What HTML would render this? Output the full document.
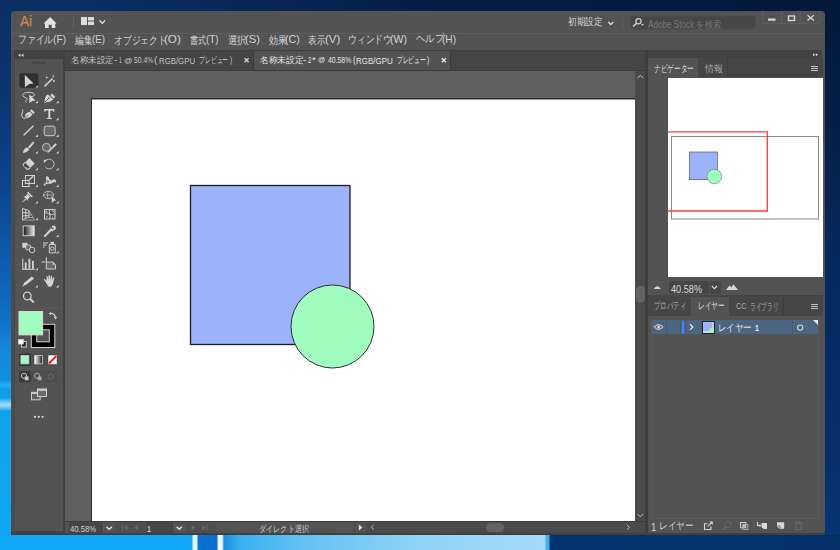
<!DOCTYPE html>
<html><head><meta charset="utf-8">
<style>
*{box-sizing:border-box;margin:0;padding:0}
html,body{width:840px;height:550px;overflow:hidden;background:#062552;font-family:'Liberation Sans',sans-serif;position:relative}
.a{position:absolute}
.t{position:absolute;white-space:nowrap;line-height:1;transform-origin:0 0}
svg{position:absolute;overflow:visible}

</style></head><body>
<!-- desktop -->
<div class="a" style="left:0;top:0;width:840px;height:12px;background:linear-gradient(90deg,#0b2f62 0,#0a2e62 100px,#082a5c 200px,#061f48 400px,#041b40 640px,#03183a 840px)"></div>
<div class="a" style="left:0;top:0;width:12px;height:550px;background:linear-gradient(180deg,#0b2f62 0,#0b3064 30px,#0b3674 100px,#0c4590 190px,#0d5cb0 260px,#1070c8 320px,#1888dc 350px,#1190e0 380px,#22b0f5 385px,#0d9eea 389px,#0f9eea 398px,#70c8f4 402px,#a8dcf6 405px,#60c0f2 408px,#12a2ec 411px,#10a7f3 550px)"></div>
<div class="a" style="left:825px;top:0;width:15px;height:550px;background:linear-gradient(180deg,#03183a 0,#042048 130px,#062a60 275px,#062f6c 450px,#083674 550px)"></div>
<div class="a" style="left:0;top:535px;width:840px;height:15px;background:linear-gradient(90deg,#10a8f5 0,#10a8f5 192px,#dff3ff 193px,#dff3ff 197px,#0a72d2 198px,#0a6fce 217px,#eef8ff 218px,#eef8ff 222px,#1a8ee0 224px,#3ab0f0 240px,#62c0f3 300px,#8fd2f6 420px,#a6dbf8 545px,#40b0f0 546px,#40b0f0 549px,#04336f 550px,#05346f 700px,#04306a 840px)"></div>
<!-- window -->
<div class="a" style="left:11px;top:11px;width:814px;height:524px;background:#535353;border-radius:4px 4px 0 0"></div>
<div class="a" style="left:11px;top:33px;width:814px;height:1px;background:#5d5d5d"></div>
<div class="a" style="left:11px;top:532px;width:814px;height:3px;background:#3f3f3f"></div>
<div class="a" style="left:11px;top:50px;width:3px;height:482px;background:#4e4c4b"></div>
<div class="a" style="left:822px;top:58px;width:1px;height:475px;background:#474747"></div>
<!-- title bar icons -->
<svg style="left:0;top:0" width="840" height="50">
  <path d="M50.1 17 L56.6 23.6 L55.3 23.6 L55.3 28 L51.7 28 L51.7 24.8 L48.7 24.8 L48.7 28 L45 28 L45 23.6 L43.6 23.6 Z" fill="#e2e2e2"/>
  <rect x="73" y="15" width="1" height="14" fill="#5f5f5f"/>
  <rect x="81" y="17" width="6" height="8" fill="#dcdcdc"/>
  <rect x="88" y="17" width="6" height="3.5" fill="#dcdcdc"/>
  <rect x="88" y="21.5" width="6" height="3.5" fill="#dcdcdc"/>
  <path d="M99.5 20.5 L102.3 23.3 L105.1 20.5" fill="none" stroke="#dcdcdc" stroke-width="1.3"/>
  <path d="M608.3 22 L610.8 24.5 L613.3 22" fill="none" stroke="#dcdcdc" stroke-width="1.3"/>
  <rect x="622.5" y="15.5" width="1" height="13.5" fill="#5f5f5f"/>
  <rect x="630.5" y="16" width="125" height="13" rx="3" fill="#474747" stroke="#4f4f4f" stroke-width="1"/>
  <circle cx="638.5" cy="21.3" r="2.6" fill="none" stroke="#d0d0d0" stroke-width="1.2"/>
  <path d="M636.6 23.3 L633 26.5" stroke="#d0d0d0" stroke-width="1.6"/>
  <path d="M641 24 L644 24 L642.5 25.7 Z" fill="#d0d0d0"/>
  <path d="M762.5 11 L762.5 21.5 Q762.5 23.5 764.5 23.5 L818 23.5 Q820 23.5 820 21.5 L820 11" fill="none" stroke="#5e5e5e" stroke-width="1"/>
  <rect x="781" y="11" width="1" height="12.5" fill="#5e5e5e"/>
  <rect x="800" y="11" width="1" height="12.5" fill="#5e5e5e"/>
  <rect x="768" y="18.5" width="7.5" height="2.2" fill="#d8d8d8"/>
  <rect x="788.5" y="16" width="6" height="4.5" fill="none" stroke="#d8d8d8" stroke-width="1.4"/>
  <path d="M807.5 15.2 L813.8 20.5 M813.8 15.2 L807.5 20.5" stroke="#d8d8d8" stroke-width="1.3"/>
</svg>
<!-- toolbar panel -->
<div class="a" style="left:14px;top:50px;width:49px;height:482px;background:#535353;border-left:1px solid #474747;border-bottom:1px solid #474747"></div>
<div class="a" style="left:14px;top:50px;width:49px;height:8.5px;background:#424242"></div>
<div class="a" style="left:63px;top:50px;width:2px;height:482px;background:#404040"></div>
<!-- toolbar icons -->
<svg style="left:0;top:0" width="70" height="440">
  <path d="M18 55.2 L20.5 53.5 L20.5 56.9 Z M21 55.2 L23.5 53.5 L23.5 56.9 Z" fill="#cfcfcf"/>
  <rect x="32.2" y="61.5" width="13.2" height="2.5" fill="#474747"/><rect x="34.7" y="61.5" width="0.6" height="2.5" fill="#4d4d4d"/><rect x="37.6" y="61.5" width="0.6" height="2.5" fill="#4d4d4d"/><rect x="40.5" y="61.5" width="0.6" height="2.5" fill="#4d4d4d"/><rect x="43.1" y="61.5" width="0.6" height="2.5" fill="#4d4d4d"/>
  <rect x="19.4" y="73.2" width="19" height="14.6" rx="2" fill="#2f2f2f"/>
  <g fill="#d4d4d4">
    <!-- flyout triangles -->
    <path d="M35.3 87.6 L37.9 85.2 L37.9 87.6 Z"/>
    <path d="M35.3 103.2 L37.9 100.8 L37.9 103.2 Z"/><path d="M56 103.2 L58.6 100.8 L58.6 103.2 Z"/>
    <path d="M56 120.2 L58.6 117.8 L58.6 120.2 Z"/>
    <path d="M35.3 137 L37.9 134.6 L37.9 137 Z"/><path d="M56 137 L58.6 134.6 L58.6 137 Z"/>
    <path d="M35.3 153.5 L37.9 151.1 L37.9 153.5 Z"/><path d="M56 153.5 L58.6 151.1 L58.6 153.5 Z"/>
    <path d="M35.3 170.2 L37.9 167.8 L37.9 170.2 Z"/><path d="M56 170.2 L58.6 167.8 L58.6 170.2 Z"/>
    <path d="M35.3 187 L37.9 184.6 L37.9 187 Z"/><path d="M56 187 L58.6 184.6 L58.6 187 Z"/>
    <path d="M35.3 203.5 L37.9 201.1 L37.9 203.5 Z"/><path d="M56 203.5 L58.6 201.1 L58.6 203.5 Z"/>
    <path d="M35.3 220.2 L37.9 217.8 L37.9 220.2 Z"/>
    <path d="M56 237 L58.6 234.6 L58.6 237 Z"/>
    <path d="M56 253.5 L58.6 251.1 L58.6 253.5 Z"/>
    <path d="M35.3 270.2 L37.9 267.8 L37.9 270.2 Z"/>
    <path d="M35.3 287.5 L37.9 285.1 L37.9 287.5 Z"/><path d="M56 287.5 L58.6 285.1 L58.6 287.5 Z"/>
    <!-- selection arrow -->
    <path d="M24.8 74.8 L33.6 83.4 L29.3 83.9 L24.9 87.2 Z"/>
    <!-- magic wand sparkles -->
    <path d="M46.8 76.2 L47.6 77.6 L46.8 79 L46 77.6 Z M45.4 77.6 L46.8 76.9 L48.2 77.6 L46.8 78.3 Z"/>
    <path d="M53.3 75 L54.1 76.3 L53.3 77.6 L52.5 76.3 Z M52 76.3 L53.3 75.6 L54.6 76.3 L53.3 77 Z"/>
    <circle cx="53.9" cy="81" r="1"/>
    <!-- lasso arrow -->
    <path d="M29.2 94.5 L35.6 100.6 L32.5 100.9 L29.3 103 Z"/>
    <!-- pen -->
    <path d="M52 93.6 L55.3 96.9 L53.6 98.6 L50.3 95.3 Z"/>
    <path d="M49.8 95.9 L53.1 99.2 Q52 101 49.5 101.8 L44.2 102.8 L45.2 97.5 Q46 95 47.8 94.6 Z"/>
    <!-- curvature pen body -->
    <path d="M31.5 109.3 L34.8 112.5 L33.3 114 L30 110.8 Z"/>
    <path d="M29.6 111.5 L32.6 114.5 L30 117 L24.2 119.2 L26 113.5 Z"/>
    <!-- T -->
    <path d="M44.3 109 L54.3 109 L54.3 111.8 L53.3 111.8 L52.8 110.5 L50.3 110.5 L50.3 117.8 L52 118.2 L52 119 L46.6 119 L46.6 118.2 L48.3 117.8 L48.3 110.5 L45.8 110.5 L45.3 111.8 L44.3 111.8 Z"/>
    <!-- brush -->
    <path d="M33.2 141.6 L34.4 142.8 L29.5 148.6 L27.9 147.2 Z"/>
    <path d="M27.4 147.6 L29.1 149.2 Q28.5 152 23 152.9 Q23.6 148.2 27.4 147.6 Z"/>
    <!-- shaper pencil -->
    <path d="M55.4 143.2 L56.9 144.6 L49.2 152 L47.5 152.9 L47.8 151.2 Z"/>
    <!-- eraser -->
    <path d="M29.4 158.1 L34.7 163.4 L30.4 167.7 L25.1 162.4 Z"/>
    <!-- pin -->
    <path d="M28.2 191.8 L32.9 196.5 L31.6 197.2 L29.8 196.8 L27.8 199.6 L28 201 L23.3 196.3 L24.8 196.5 L27.4 194.3 L27.3 192.6 Z"/>
    <path d="M25.6 198.4 L26.4 199.2 L22.5 202.2 L22.2 201.8 Z"/>
    <!-- shape builder cursor -->
    <path d="M51.6 196.2 L56.3 200.5 L54 200.7 L51.8 203 Z"/>
    <!-- hand -->
    <path d="M46.5 283.5 L43.8 279.6 Q43.6 278.6 44.8 279 L46.6 280.8 L46.4 276.5 Q46.8 275.6 47.6 276.5 L48.3 280 L48.6 275.5 Q49.2 274.6 49.9 275.5 L50.1 279.8 L51 276 Q51.6 275.3 52.2 276.1 L51.9 280.3 L53.2 277.5 Q54 277 54.3 277.9 L53.3 282.5 Q52.5 286.6 49.5 286.9 Q47.8 286.8 46.5 283.5 Z"/>
    <!-- pencil -->
    <path d="M31.8 276.4 L34.2 278.6 L26.2 284.7 L22.3 286.6 L24.3 282.8 Z"/>
    <!-- symbol sprayer bottle -->
    <rect x="50.5" y="241.8" width="3.5" height="2" />
    <rect x="43" y="242.5" width="5" height="1"/><rect x="43" y="244.6" width="3.5" height="1"/><rect x="43" y="246.6" width="1.5" height="1"/>
    <!-- artboard -->
    <rect x="45.8" y="257" width="1" height="5"/><rect x="41.5" y="261.5" width="4" height="1"/>
    <!-- graph bars -->
    <rect x="22.3" y="258.5" width="1" height="11"/><rect x="22.3" y="268.8" width="12.5" height="1"/>
    <rect x="24.8" y="262.5" width="1.8" height="6.5"/><rect x="28.5" y="258.8" width="1.8" height="10"/><rect x="32" y="260.8" width="1.8" height="8"/>
  </g>
  <g fill="none" stroke="#d2d2d2" stroke-width="1">
    <path d="M44.6 102.4 L48.3 98.7" stroke="#535353" stroke-width="0.9"/>
    <circle cx="48.9" cy="98.1" r="0.9" fill="#535353" stroke="none"/>
    <path d="M24.5 118.8 L28 115.3" stroke="#535353" stroke-width="0.9"/>
    <path d="M44.5 86.3 L52.6 78.5" stroke-width="1.6"/>
    <path d="M30 96.5 C 36 97, 36 92.5, 29.5 92.3 C 22 92.3, 21 96, 25 97.3 C 27 98, 27.5 99.5, 26.5 100.2 C 24.5 101.5, 26 102.5, 26.5 102.5"/>
    <path d="M22.3 109.3 C 24 110.5, 21.5 113, 21.8 115.5 C 22 117.5, 23 118.5, 24.5 118.5"/>
    <path d="M23.6 135.3 L33.5 125.7" stroke-width="1.4"/>
    <rect x="44.2" y="126.1" width="10.9" height="9.6" rx="2" fill="#6b6b6b" stroke="#cacaca"/>
    <circle cx="46.4" cy="147.3" r="4" fill="#6b6b6b" stroke="#bdbdbd"/>
    <path d="M25.1 162.4 L23.2 164.3 Q22.8 165 23.4 165.6 L26.8 169 Q27.4 169.6 28.1 169.2 L30.4 167.7" stroke="#d0d0d0" stroke-width="1.1"/>
    <path d="M45.2 161.2 A 4.9 4.9 0 1 1 45.5 167.3" stroke="#bdbdbd"/>
    <path d="M43.8 159.8 L47.2 159.8 L43.8 163.2 Z" fill="#d2d2d2" stroke="none"/>
    <rect x="25.5" y="175.5" width="9" height="8"/>
    <rect x="22.5" y="180.5" width="6.5" height="6"/>
    <path d="M29 180 L33.2 176.2" stroke-width="1.3"/>
    <path d="M45.3 183.8 C 46.3 182, 46.8 180, 45.9 178.3 C 45.3 176.8, 47.3 175.6, 48.4 176.9 C 49.4 178.2, 49 179.8, 50.6 180.3 C 52 180.8, 53 179.3, 54.4 179.3 C 55.8 179.3, 56.4 181.3, 55.7 183 C 55.1 181.9, 54.1 181.7, 53.1 182.6 C 51.6 184, 49.6 184.4, 48.1 183.5 C 47.2 184.3, 46.2 184.7, 45.3 183.8 Z" fill="#d0d0d0" stroke="none"/>
    <circle cx="44.6" cy="184.6" r="1.1" fill="#d0d0d0" stroke="none"/>
    <circle cx="47.9" cy="181.4" r="1" fill="#535353" stroke="none"/>
    <ellipse cx="48.5" cy="195" rx="5" ry="3.6" stroke="#c4c4c4"/>
    <path d="M48.5 191.5 C 47 193, 47 197, 48.5 198.6 M43.5 195 L53.5 195" stroke="#a8a8a8"/>
    <path d="M22.5 208.5 L29 210.5 L29 216.5 L22.5 220 Z M25.8 209.5 L25.8 218.3 M22.5 212.5 L29 213 M22.5 216 L29 215.5" stroke="#cacaca"/>
    <path d="M29 210.5 L34.5 220 L22.5 220 M29.5 215 L31.5 215 M26 217.5 L33 217.5" stroke="#a0a0a0"/>
    <rect x="44.5" y="209.5" width="10.5" height="9.5" stroke="#cfcfcf"/>
    <path d="M44.5 213.5 C 47 211.5, 50 216, 55 214 M49.8 209.5 C 48 212, 51.5 216, 49.5 219 M45.5 211 L47.5 212 M52.5 210.5 L54 212.5 M46 217.5 L47.8 216 M52 217 L53.5 218.3" stroke="#cfcfcf"/>
    <path d="M52 229.5 L45.2 236.3 Q44.2 237 44.5 235.8 L51 229" stroke="#cfcfcf" stroke-width="1.1"/>
    <path d="M50.6 228.6 L53 231 M52.3 227.4 C 53.5 225.8, 55.5 226.5, 54.8 228.6 L53.6 229.8" stroke="#d2d2d2" stroke-width="2"/>
    <rect x="22.3" y="242.8" width="5" height="5" fill="#d2d2d2" stroke="none"/>
    <rect x="25.8" y="245" width="4.8" height="4.8" rx="1" stroke="#c8c8c8" fill="#6b6b6b"/>
    <circle cx="32" cy="250" r="2.8" stroke="#c8c8c8" fill="#535353"/>
    <path d="M49.3 244.5 L55.3 244.5 L55.3 252.8 L49.3 252.8 Z" stroke="#cfcfcf" fill="#535353"/>
    <circle cx="52.3" cy="248.6" r="1.7" stroke="#cfcfcf"/>
    <path d="M46.3 262 L52.8 262 L55.5 264.7 L55.5 269 L46.3 269 Z" stroke="#cfcfcf" fill="#6b6b6b"/>
    <path d="M52.8 262 L52.8 264.7 L55.5 264.7 Z" fill="#cfcfcf" stroke="none"/>
    <circle cx="27.3" cy="296" r="3.8" stroke-width="1.3"/>
    <path d="M30.2 299 L33.8 302.5" stroke-width="1.8"/>
    <path d="M18.5 308 L61 308" stroke="#5d5d5d"/>
  </g>
  <!-- gradient tool -->
  <defs>
    <linearGradient id="gt" x1="0" x2="1" y1="0" y2="0"><stop offset="0" stop-color="#111"/><stop offset="1" stop-color="#eee"/></linearGradient>
    <linearGradient id="gm" x1="0" x2="1" y1="0" y2="0"><stop offset="0" stop-color="#fff"/><stop offset="1" stop-color="#222"/></linearGradient>
  </defs>
  <rect x="23.2" y="225.9" width="11" height="9.8" fill="url(#gt)" stroke="#cfcfcf" stroke-width="1"/>
  <!-- eraser dark stripe -->
  <path d="M24.3 164.6 L26.3 166.6 L25.3 167.6 L23.6 165.6 Z" fill="#3a3a3a"/>
  <path d="M27.3 193.4 L31.8 197.6" stroke="#535353" stroke-width="0.6"/>
  <!-- fill / stroke -->
  <rect x="31.3" y="324.3" width="23.5" height="23.2" fill="#000" stroke="#d0d0d0" stroke-width="1"/>
  <rect x="36.8" y="329.8" width="12.5" height="12" fill="#535353" stroke="#d0d0d0" stroke-width="1"/>
  <rect x="19" y="311.5" width="23.6" height="23.4" fill="#a0fcbf" stroke="#d8d8d8" stroke-width="1"/>
  <path d="M50 313.5 Q54.5 313 55.5 317.5" fill="none" stroke="#d0d0d0" stroke-width="1.2"/>
  <path d="M48.6 313.6 L51 312 L51 315.2 Z M53.8 317 L57.2 317 L55.5 319.4 Z" fill="#d0d0d0"/>
  <rect x="21.5" y="341.5" width="4.8" height="5.5" fill="#222" stroke="#d0d0d0" stroke-width="1"/>
  <rect x="18.5" y="339.5" width="4.8" height="4.5" fill="#fff" stroke="#d0d0d0" stroke-width="0.8"/>
  <!-- color modes -->
  <rect x="19.3" y="353.6" width="11.6" height="12.4" rx="1.5" fill="#2f2f2f"/>
  <rect x="31.5" y="353.6" width="12.5" height="12.4" fill="#4e4e4e"/>
  <rect x="44.5" y="353.6" width="12.8" height="12.4" fill="#4e4e4e"/>
  <rect x="20.9" y="355.6" width="8" height="8.3" fill="#a0fcbf" stroke="#d0d0d0" stroke-width="0.8"/>
  <rect x="34.5" y="355.6" width="8" height="8.3" fill="url(#gm)" stroke="#d0d0d0" stroke-width="0.8"/>
  <rect x="48.6" y="355.6" width="8" height="8.3" fill="#fff" stroke="#d0d0d0" stroke-width="0.8"/>
  <path d="M49 363.5 L56.3 356" stroke="#f01818" stroke-width="1.8"/>
  <!-- draw modes -->
  <rect x="19.3" y="371" width="11.6" height="11.3" rx="1.5" fill="#393939"/>
  <rect x="31.5" y="371" width="12.5" height="11.3" fill="#4e4e4e"/>
  <rect x="44.5" y="371" width="12.8" height="11.3" fill="#4e4e4e"/>
  <circle cx="24" cy="375.8" r="2.6" fill="none" stroke="#c8c8c8" stroke-width="1"/>
  <rect x="24.8" y="376.5" width="3.8" height="3.8" fill="#c8c8c8"/>
  <circle cx="37" cy="375.8" r="2.6" fill="none" stroke="#a8a8a8" stroke-width="1"/>
  <rect x="37.8" y="376.5" width="3.8" height="3.8" fill="#a8a8a8"/>
  <circle cx="50.6" cy="376.6" r="2.6" fill="none" stroke="#6a6a6a" stroke-width="1"/>
  <!-- screen mode -->
  <rect x="31.5" y="392.3" width="8.6" height="7.5" fill="#5f5f5f" stroke="#cfcfcf" stroke-width="1"/>
  <rect x="37.5" y="389" width="9" height="7.5" fill="#6a6a6a" stroke="#cfcfcf" stroke-width="1"/>
  <rect x="37.5" y="389" width="9" height="1.8" fill="#cfcfcf"/>
  <rect x="31.5" y="392.3" width="5.8" height="1.6" fill="#cfcfcf"/>
  <circle cx="35" cy="416.8" r="1.1" fill="#d8d8d8"/><circle cx="38.8" cy="416.8" r="1.1" fill="#d8d8d8"/><circle cx="42.6" cy="416.8" r="1.1" fill="#d8d8d8"/>
</svg>

<!-- document tabs -->
<div class="a" style="left:65px;top:50px;width:580px;height:21px;background:#454545;border-bottom:1px solid #3b3b3b"></div>
<div class="a" style="left:253px;top:50px;width:198px;height:21px;background:#535353;border-left:1px solid #3b3b3b;border-right:1px solid #3b3b3b;border-bottom:1px solid #3b3b3b"></div>
<div class="a" style="left:65px;top:50px;width:580px;height:1px;background:#404040"></div>
<svg style="left:0;top:0" width="840" height="80">
  <path d="M244.6 58.2 L248.6 62.2 M248.6 58.2 L244.6 62.2" stroke="#cfcfcf" stroke-width="1.4"/>
  <path d="M441.8 58.2 L445.8 62.2 M445.8 58.2 L441.8 62.2" stroke="#e6e6e6" stroke-width="1.4"/>
</svg>
<!-- canvas -->
<div class="a" style="left:65px;top:71px;width:570px;height:451px;background:#5f5f5f"></div>
<div class="a" style="left:91px;top:98px;width:544px;height:424px;background:#fff;border-left:1px solid #262626;border-top:1px solid #262626"></div>
<div class="a" style="left:92px;top:99px;width:543px;height:1px;background:#9a9a9a"></div>
<svg style="left:0;top:0" width="840" height="550">
  <rect x="190.5" y="185.5" width="159.5" height="159" fill="#9cb3fb" stroke="#1d1d24" stroke-width="1.3"/>
  <circle cx="332.5" cy="326.5" r="41.5" fill="#a0fcbf" stroke="#2e2e2e" stroke-width="1"/>
</svg>
<!-- v scrollbar -->
<div class="a" style="left:635px;top:71px;width:10px;height:451px;background:#4a4a4a"></div>
<div class="a" style="left:635.5px;top:286px;width:9.5px;height:17px;background:#636363;border-radius:5px"></div>
<div class="a" style="left:645px;top:50px;width:3px;height:483px;background:#3d3d3d"></div>
<!-- status bar -->
<div class="a" style="left:65px;top:521px;width:580px;height:12px;background:#535353;border-top:1px solid #3d3d3d"></div>
<div class="a" style="left:69px;top:522px;width:33.5px;height:11px;background:#464646"></div>
<div class="a" style="left:146px;top:522px;width:27.5px;height:11px;background:#464646"></div>
<div class="a" style="left:366px;top:522px;width:269px;height:10.5px;background:#4b4b4b"></div>
<div class="a" style="left:486px;top:523px;width:18px;height:9px;background:#636363;border-radius:4.5px"></div>
<div class="a" style="left:635px;top:522px;width:10px;height:11px;background:#4a4a4a"></div>
<svg style="left:0;top:0" width="840" height="550">
  <rect x="103" y="522.5" width="1" height="9.5" fill="#5c5c5c"/><rect x="115.5" y="522.5" width="29.5" height="9.5" fill="#4e4e4e"/><rect x="173.5" y="522.5" width="1" height="9.5" fill="#5c5c5c"/><rect x="186" y="522.5" width="28" height="9.5" fill="#4e4e4e"/>
  <path d="M106.4 526.8 L109.2 529.4 L112 526.8" fill="none" stroke="#e4e4e4" stroke-width="1.4"/>
  <path d="M176.6 526.8 L179.2 529.2 L181.8 526.8" fill="none" stroke="#e4e4e4" stroke-width="1.4"/>
  <rect x="122" y="525" width="1" height="5.3" fill="#6a6a6a"/>
  <path d="M127.4 525 L123.8 527.65 L127.4 530.3 Z" fill="#6a6a6a"/>
  <path d="M137.8 525 L134.3 527.65 L137.8 530.3 Z" fill="#6a6a6a"/>
  <path d="M191.8 525 L195.4 527.65 L191.8 530.3 Z" fill="#6a6a6a"/>
  <path d="M202 525 L205.6 527.65 L202 530.3 Z" fill="#6a6a6a"/>
  <rect x="206.5" y="525" width="1" height="5.3" fill="#6a6a6a"/>
  <rect x="214" y="522" width="1" height="11" fill="#484848"/>
  <rect x="354" y="522" width="1" height="11" fill="#484848"/>
  <path d="M358.8 524.5 L362.5 527.5 L358.8 530.5 Z" fill="#dcdcdc"/>
  <path d="M373.7 525 L371.3 527.3 L373.7 529.6" fill="none" stroke="#bdbdbd" stroke-width="1"/>
  <path d="M627 525 L629.5 527.3 L627 529.6" fill="none" stroke="#bdbdbd" stroke-width="1"/>
  <path d="M637.6 78 L640.4 75.3 L643.2 78" fill="none" stroke="#bdbdbd" stroke-width="1"/>
  <path d="M637.6 514 L640.4 516.8 L643.2 514" fill="none" stroke="#bdbdbd" stroke-width="1"/>
</svg>
<!-- right panel -->
<div class="a" style="left:648px;top:50px;width:174.2px;height:8px;background:#424242;border-radius:0 2px 0 0"></div>
<div class="a" style="left:648px;top:58px;width:174.5px;height:19px;background:#454545"></div>
<div class="a" style="left:648px;top:58px;width:50px;height:19px;background:#535353"></div>
<div class="a" style="left:698px;top:58px;width:30px;height:19px;border-right:1px solid #3c3c3c"></div>
<div class="a" style="left:648px;top:77px;width:174.5px;height:218px;background:#535353"></div>
<div class="a" style="left:668px;top:78px;width:154.5px;height:199px;background:#fff"></div>
<div class="a" style="left:669px;top:281px;width:52px;height:13px;background:#464646;border-radius:2px"></div>
<div class="a" style="left:708.5px;top:281px;width:1px;height:13px;background:#535353"></div>
<svg style="left:0;top:0" width="840" height="550">
  <path d="M813 53.2 L815.3 54.7 L813 56.2 Z M815.8 53.2 L818.1 54.7 L815.8 56.2 Z" fill="#d4d4d4"/>
  <rect x="811" y="66" width="7" height="1" fill="#c4c4c4"/>
  <rect x="811" y="68" width="7" height="1" fill="#c4c4c4"/>
  <rect x="811" y="70" width="7" height="1" fill="#c4c4c4"/>
  <rect x="671.5" y="136.5" width="147" height="82.5" fill="none" stroke="#8a8a8a" stroke-width="1"/>
  <path d="M668 131.8 L767.3 131.8 L767.3 211 L668 211" fill="none" stroke="#ff3b3b" stroke-width="1.3"/>
  <rect x="689.5" y="152" width="27.8" height="27.7" fill="#9cb3fb" stroke="#3a3f6a" stroke-width="0.6"/>
  <circle cx="714.3" cy="176.5" r="7.3" fill="#a0fcbf" stroke="#5a7a60" stroke-width="0.6"/>
  <path d="M653.7 289 L655.5 287 Q657.3 285.5 659 287 L661 289 Z" fill="#d8d8d8"/>
  <path d="M726 290 L729.5 285.5 L731.5 287.5 L733.3 284.3 L738 290 Z" fill="#d8d8d8"/>
  <path d="M711.8 286 L714.4 288.6 L717 286" fill="none" stroke="#d8d8d8" stroke-width="1.2"/>
</svg>
<div class="a" style="left:648px;top:295px;width:174.5px;height:2px;background:#454545"></div>
<div class="a" style="left:648px;top:297px;width:174.5px;height:18.5px;background:#464646"></div>
<div class="a" style="left:691px;top:297px;width:38px;height:18.5px;background:#535353"></div>
<div class="a" style="left:783px;top:297px;width:1px;height:18.5px;background:#3c3c3c"></div>
<div class="a" style="left:648px;top:315.5px;width:174.5px;height:217.5px;background:#535353"></div>
<div class="a" style="left:651px;top:318px;width:167.5px;height:201px;border:1px solid #5a5a5a;border-top:none"></div>
<div class="a" style="left:652px;top:320px;width:166px;height:14px;background:#4c6580"></div>
<svg style="left:0;top:0" width="840" height="550">
  <rect x="811" y="304" width="7" height="1" fill="#bdbdbd"/>
  <rect x="811" y="306" width="7" height="1" fill="#bdbdbd"/>
  <rect x="811" y="308" width="7" height="1" fill="#bdbdbd"/>
  <rect x="666" y="320" width="1" height="14" fill="#45596f"/>
  <rect x="680" y="320" width="1" height="14" fill="#45596f"/>
  <rect x="685.5" y="320" width="1" height="14" fill="#45596f"/>
  <rect x="792" y="320" width="1" height="14" fill="#45596f"/>
  <rect x="681.9" y="320.8" width="2.2" height="13" fill="#4a80ff"/>
  <path d="M654.3 327 Q658.6 322.3 662.9 327 Q658.6 331.7 654.3 327 Z" fill="none" stroke="#d0d0d0" stroke-width="1.1"/>
  <circle cx="658.6" cy="327" r="1.5" fill="#d0d0d0"/>
  <path d="M690 324.3 L692.8 327.1 L690 329.9" fill="none" stroke="#e8e8e8" stroke-width="1.3"/>
  <rect x="702.5" y="321.6" width="11.8" height="11.8" fill="#fff" stroke="#1a1a1a" stroke-width="1.1"/>
  <rect x="703.1" y="322.2" width="9.5" height="9.3" fill="#9cb3fb"/>
  <circle cx="711.6" cy="330.6" r="2.5" fill="#a0fcbf"/>
  <circle cx="800.2" cy="327.6" r="2.6" fill="none" stroke="#d8d8d8" stroke-width="1.1"/>
  <path d="M813 320 L818 320 L818 325 Z" fill="#e8e8e8"/>
  <!-- footer icons -->
  <path d="M707.5 523.8 L704.5 523.8 L704.5 529.5 L711 529.5 L711 526.5" fill="none" stroke="#d4d4d4" stroke-width="1.1"/>
  <path d="M707.8 526.3 L712.2 522" fill="none" stroke="#d4d4d4" stroke-width="1.1"/>
  <path d="M709.3 521.6 L712.7 521.6 L712.7 525 Z" fill="#d4d4d4"/>
  <circle cx="728" cy="524.5" r="3" fill="none" stroke="#6a6a6a" stroke-width="1"/>
  <path d="M725.8 526.8 L722.8 529.8" stroke="#6a6a6a" stroke-width="1.4"/>
  <rect x="740.5" y="522.5" width="5.3" height="5.3" fill="none" stroke="#cfcfcf" stroke-width="1"/>
  <rect x="742.8" y="524.5" width="5" height="5" fill="none" stroke="#a8a8a8" stroke-width="1"/>
  <rect x="742.8" y="524.5" width="3" height="3.3" fill="#bdbdbd"/>
  <path d="M757.5 522 L757.5 525.5 L760.5 525.5" fill="none" stroke="#dadada" stroke-width="1.1"/>
  <path d="M759.5 524 L761.3 525.5 L759.5 527 Z" fill="#dadada"/>
  <path d="M761.5 523 L767 523 L767 529 L763.5 529 L761.5 527 Z" fill="#dadada"/>
  <path d="M777 522.2 L784.2 522.2 L784.2 528.8 L779.5 528.8 L777 526.3 Z" fill="#dadada"/>
  <path d="M777.3 526 L780 526 L780 528.5" fill="none" stroke="#535353" stroke-width="0.8"/>
  <path d="M794.8 523.2 L802.3 523.2 M796.8 523.2 L796.8 521.9 L800.3 521.9 L800.3 523.2 M795.6 524.3 L796.2 529.7 L800.9 529.7 L801.5 524.3" fill="none" stroke="#6a6a6a" stroke-width="1"/>
</svg>

<div class="t" style="left:20.20px;top:13.30px;font-size:15px;color:#cb8a5c;transform:scaleX(0.908);-webkit-text-stroke:0.25px #cb8a5c;">Ai</div>
<div class="t" style="left:18.00px;top:34.40px;font-size:11px;color:#d4d4d4;transform:scaleX(0.800);">ファイル</div>
<div class="t" style="left:52.97px;top:33.80px;font-size:11px;color:#d4d4d4;transform:scaleX(0.931);">(F)</div>
<div class="t" style="left:75.20px;top:35.40px;font-size:11px;color:#d4d4d4;transform:scaleX(0.795);">編集</div>
<div class="t" style="left:91.52px;top:33.80px;font-size:11px;color:#d4d4d4;transform:scaleX(0.877);">(E)</div>
<div class="t" style="left:114.00px;top:35.40px;font-size:11px;color:#d4d4d4;transform:scaleX(0.798);">オブジェクト</div>
<div class="t" style="left:164.14px;top:33.80px;font-size:11px;color:#d4d4d4;transform:scaleX(1.057);">(O)</div>
<div class="t" style="left:190.00px;top:35.40px;font-size:11px;color:#d4d4d4;transform:scaleX(0.736);">書式</div>
<div class="t" style="left:206.22px;top:33.80px;font-size:11px;color:#d4d4d4;transform:scaleX(0.885);">(T)</div>
<div class="t" style="left:227.75px;top:35.40px;font-size:11px;color:#d4d4d4;transform:scaleX(0.855);">選択</div>
<div class="t" style="left:245.08px;top:33.80px;font-size:11px;color:#d4d4d4;transform:scaleX(1.015);">(S)</div>
<div class="t" style="left:268.60px;top:35.40px;font-size:11px;color:#d4d4d4;transform:scaleX(0.814);">効果</div>
<div class="t" style="left:285.14px;top:33.80px;font-size:11px;color:#d4d4d4;transform:scaleX(0.964);">(C)</div>
<div class="t" style="left:307.82px;top:35.40px;font-size:11px;color:#d4d4d4;transform:scaleX(0.781);">表示</div>
<div class="t" style="left:324.65px;top:33.80px;font-size:11px;color:#d4d4d4;transform:scaleX(1.046);">(V)</div>
<div class="t" style="left:347.80px;top:34.40px;font-size:11px;color:#d4d4d4;transform:scaleX(0.800);">ウィンドウ</div>
<div class="t" style="left:390.44px;top:33.80px;font-size:11px;color:#d4d4d4;transform:scaleX(0.956);">(W)</div>
<div class="t" style="left:416.20px;top:33.40px;font-size:11px;color:#d4d4d4;transform:scaleX(0.845);">ヘルプ</div>
<div class="t" style="left:442.38px;top:33.80px;font-size:11px;color:#d4d4d4;transform:scaleX(0.921);">(H)</div>
<div class="t" style="left:567.50px;top:17.00px;font-size:10px;color:#d8d8d8;transform:scaleX(0.854);">初期設定</div>
<div class="t" style="left:647.50px;top:19.50px;font-size:10px;color:#777777;transform:scaleX(0.815);">Adobe Stock を検索</div>
<div class="t" style="left:71.15px;top:56.30px;font-size:9px;color:#c4c4c4;transform:scaleX(0.949);">名称未設定</div>
<div class="t" style="left:114.30px;top:55.50px;font-size:9px;color:#c4c4c4;transform:scaleX(1.200);">-</div>
<div class="t" style="left:119.25px;top:55.90px;font-size:9px;color:#c4c4c4;transform:scaleX(0.550);">1</div>
<div class="t" style="left:123.65px;top:56.60px;font-size:8px;color:#c4c4c4;transform:scaleX(1.050);">@</div>
<div class="t" style="left:134.15px;top:55.90px;font-size:9px;color:#c4c4c4;transform:scaleX(0.750);">50.4%</div>
<div class="t" style="left:154.40px;top:56.20px;font-size:9px;color:#c4c4c4;transform:scaleX(1.100);">(</div>
<div class="t" style="left:158.93px;top:57.00px;font-size:9px;color:#c4c4c4;transform:scaleX(0.868);">RGB/GPU</div>
<div class="t" style="left:199.15px;top:56.30px;font-size:9px;color:#c4c4c4;transform:scaleX(0.649);">プレビュー</div>
<div class="t" style="left:229.80px;top:56.20px;font-size:9px;color:#c4c4c4;transform:scaleX(0.733);">)</div>
<div class="t" style="left:259.74px;top:56.30px;font-size:9px;color:#e6e6e6;transform:scaleX(0.960);">名称未設定</div>
<div class="t" style="left:303.00px;top:55.50px;font-size:9px;color:#e6e6e6;transform:scaleX(1.067);">-</div>
<div class="t" style="left:307.60px;top:56.00px;font-size:9px;color:#e6e6e6;transform:scaleX(0.660);">2</div>
<div class="t" style="left:311.60px;top:55.50px;font-size:9px;color:#e6e6e6;transform:scaleX(1.067);">*</div>
<div class="t" style="left:317.80px;top:56.40px;font-size:8px;color:#e6e6e6;transform:scaleX(0.900);">@</div>
<div class="t" style="left:328.00px;top:56.00px;font-size:9px;color:#e6e6e6;transform:scaleX(0.763);">40.58%</div>
<div class="t" style="left:352.50px;top:56.20px;font-size:9px;color:#e6e6e6;transform:scaleX(0.900);">(</div>
<div class="t" style="left:355.92px;top:57.00px;font-size:9px;color:#e6e6e6;transform:scaleX(0.885);">RGB/GPU</div>
<div class="t" style="left:396.87px;top:56.30px;font-size:9px;color:#e6e6e6;transform:scaleX(0.635);">プレビュー</div>
<div class="t" style="left:427.00px;top:56.20px;font-size:9px;color:#e6e6e6;transform:scaleX(0.700);">)</div>
<div class="t" style="left:653.84px;top:64.00px;font-size:10px;color:#dcdcdc;transform:scaleX(0.664);">ナビゲーター</div>
<div class="t" style="left:705.00px;top:64.00px;font-size:10px;color:#a8a8a8;transform:scaleX(0.895);">情報</div>
<div class="t" style="left:670.50px;top:284.60px;font-size:10px;color:#d8d8d8;transform:scaleX(0.918);">40.58%</div>
<div class="t" style="left:653.95px;top:301.40px;font-size:10px;color:#a8a8a8;transform:scaleX(0.647);">プロパティ</div>
<div class="t" style="left:698.09px;top:300.90px;font-size:10px;color:#dcdcdc;transform:scaleX(0.663);">レイヤー</div>
<div class="t" style="left:736.00px;top:300.60px;font-size:9.5px;color:#a8a8a8;transform:scaleX(0.769);">CC</div>
<div class="t" style="left:749.83px;top:301.90px;font-size:10px;color:#a8a8a8;transform:scaleX(0.572);">ライブラリ</div>
<div class="t" style="left:718.06px;top:323.20px;font-size:10px;color:#e4e4e4;transform:scaleX(0.845);">レイヤー</div>
<div class="t" style="left:754.90px;top:324.00px;font-size:8.5px;color:#e8e8e8;transform:scaleX(0.820);font-weight:bold;">1</div>
<div class="t" style="left:650.85px;top:523.10px;font-size:10px;color:#d8d8d8;transform:scaleX(0.950);">1</div>
<div class="t" style="left:659.05px;top:521.10px;font-size:10px;color:#d0d0d0;transform:scaleX(0.853);">レイヤー</div>
<div class="t" style="left:70.30px;top:524.80px;font-size:9px;color:#d0d0d0;transform:scaleX(0.850);">40.58%</div>
<div class="t" style="left:146.50px;top:524.80px;font-size:9px;color:#d0d0d0;transform:scaleX(1.000);">1</div>
<div class="t" style="left:259.00px;top:524.60px;font-size:9px;color:#c8c8c8;transform:scaleX(0.795);">ダイレクト選択</div>
</body></html>
